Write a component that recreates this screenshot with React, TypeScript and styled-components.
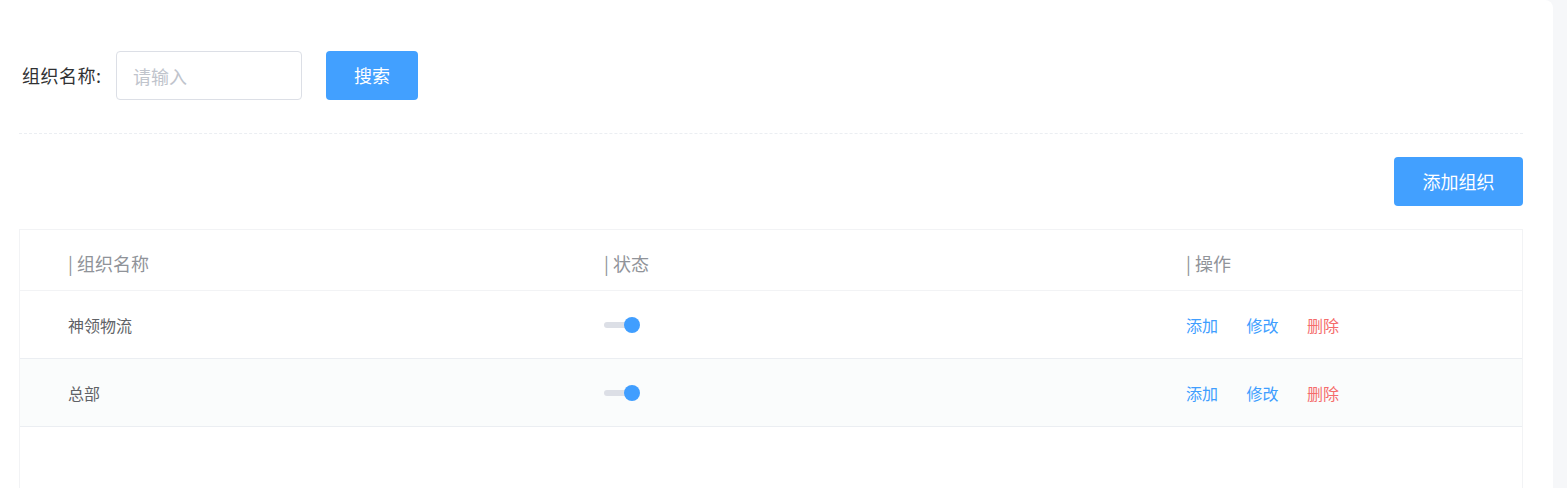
import React from "react";
import styled, { createGlobalStyle } from "styled-components";

const GlobalStyle = createGlobalStyle`
  html, body {
    margin: 0;
    padding: 0;
    background: #f6f7f9;
    font-family: "Noto Sans CJK SC", "Noto Sans", sans-serif;
    overflow: hidden;
  }
  * { box-sizing: border-box; }
`;

const Card = styled.div`
  width: 1553px;
  min-height: 488px;
  background: #fff;
  border-radius: 0 8px 0 0;
  padding: 51px 30px 0 19px;
`;

const SearchBar = styled.form`
  display: flex;
  align-items: center;
  padding-bottom: 33px;
  border-bottom: 1px dashed #ebeef2;
`;

const Label = styled.label`
  width: 97px;
  padding-left: 3px;
  font-size: 18px;
  line-height: 49px;
  color: #303133;
  white-space: nowrap;
  letter-spacing: 0.5px;
`;

const Input = styled.input`
  width: 186px;
  height: 49px;
  border: 1px solid #dcdfe6;
  border-radius: 4px;
  padding: 0 16px;
  font-family: inherit;
  font-size: 18px;
  color: #606266;
  outline: none;
  &::placeholder { color: #c0c4cc; }
`;

const PrimaryButton = styled.button<{ $w: number }>`
  width: ${(p) => p.$w}px;
  height: 49px;
  border: none;
  border-radius: 4px;
  background: #42a0ff;
  color: #fff;
  font-family: inherit;
  font-size: 18px;
  line-height: 49px;
  padding: 0;
  cursor: pointer;
`;

const SearchButton = styled(PrimaryButton)`
  margin-left: 24px;
`;

const Toolbar = styled.div`
  display: flex;
  justify-content: flex-end;
  padding: 23px 0;
`;

const Table = styled.div`
  border: 1px solid #f2f3f5;
  border-bottom: none;
  min-height: 300px;
`;

const Row = styled.div<{ $striped?: boolean; $head?: boolean }>`
  display: grid;
  grid-template-columns: 536px 582px 1fr;
  align-items: center;
  height: ${(p) => (p.$head ? 61 : 68)}px;
  border-bottom: 1px solid ${(p) => (p.$head ? "#f2f3f5" : "#ebeef2")};
  background: ${(p) => (p.$striped ? "#fafcfc" : "#fff")};
`;

const HeadCell = styled.div`
  padding-left: 48px;
  padding-top: 5px;
  font-size: 18px;
  line-height: 24px;
  color: #909399;
`;

const Cell = styled.div`
  padding-left: 48px;
  font-size: 16px;
  line-height: 22px;
  color: #606266;
  display: flex;
  align-items: center;
`;

const Switch = styled.span`
  position: relative;
  display: inline-block;
  width: 36px;
  height: 16px;
  margin-top: 1px;
`;

const Track = styled.span`
  position: absolute;
  left: 0;
  top: 5px;
  width: 30px;
  height: 6px;
  border-radius: 3px;
  background: #dcdfe6;
`;

const Thumb = styled.span`
  position: absolute;
  left: 20px;
  top: 0;
  width: 16px;
  height: 16px;
  border-radius: 50%;
  background: #409eff;
`;

const Actions = styled.div`
  display: flex;
  gap: 28.5px;
`;

const ActionLink = styled.a<{ $danger?: boolean }>`
  font-size: 16px;
  line-height: 22px;
  color: ${(p) => (p.$danger ? "#f56c6c" : "#409eff")};
  cursor: pointer;
  text-decoration: none;
`;

const rows = ["神领物流", "总部"];

export default function App() {
  return (
    <>
      <GlobalStyle />
      <Card>
        <SearchBar onSubmit={(e) => e.preventDefault()}>
          <Label>组织名称:</Label>
          <Input placeholder="请输入" />
          <SearchButton $w={92} type="submit">搜索</SearchButton>
        </SearchBar>
        <Toolbar>
          <PrimaryButton $w={129} type="button">添加组织</PrimaryButton>
        </Toolbar>
        <Table>
          <Row $head>
            <HeadCell>| 组织名称</HeadCell>
            <HeadCell>| 状态</HeadCell>
            <HeadCell>| 操作</HeadCell>
          </Row>
          {rows.map((name, i) => (
            <Row key={name} $striped={i % 2 === 1}>
              <Cell>{name}</Cell>
              <Cell>
                <Switch>
                  <Track />
                  <Thumb />
                </Switch>
              </Cell>
              <Cell>
                <Actions>
                  <ActionLink>添加</ActionLink>
                  <ActionLink>修改</ActionLink>
                  <ActionLink $danger>删除</ActionLink>
                </Actions>
              </Cell>
            </Row>
          ))}
        </Table>
      </Card>
    </>
  );
}
